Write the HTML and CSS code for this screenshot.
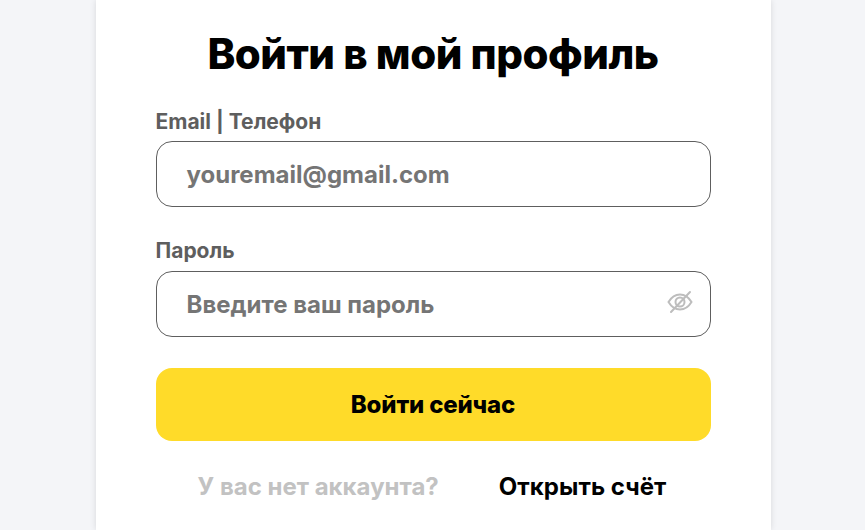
FILE: index.html
```html
<!DOCTYPE html>
<html>
<head>
<meta charset="utf-8">
<meta name="viewport" content="width=device-width, initial-scale=1.0">
<title>Войти в мой профиль</title>
<link rel="stylesheet" href="styles.css">
</head>
<body>
    <div class="card">
        <h1 class="title">Войти в мой профиль</h1>
        <form class="form">
            <label class="label">Email | Телефон</label>
            <div class="field"><span class="placeholder">youremail@gmail.com</span></div>
            <label class="label label-second">Пароль</label>
            <div class="field">
                <span class="placeholder">Введите ваш пароль</span>
                <svg class="eye" width="28" height="28" viewBox="0 0 28 28" fill="none" stroke="#bdbdbd" stroke-width="2" stroke-linecap="round">
                    <path d="M2.5 14c3-5 7-7.5 11.500-7.500S22.500 9 25.500 14c-3 5-7 7.500-11.500 7.500S5.500 19 2.500 14z"/>
                    <circle cx="14" cy="14" r="4.500"/>
                    <path d="M5 24L24 4"/>
                </svg>
            </div>
            <button class="submit" type="button">Войти сейчас</button>
        </form>
        <div class="footer">
            <span class="muted">У вас нет аккаунта?</span>
            <a class="open">Открыть счёт</a>
        </div>
    </div>
</body>
</html>
```

FILE: styles.css
```css
*{
    box-sizing: border-box;
    font-family: 'Inter', 'Liberation Sans', sans-serif;
}
html, body{
    height:100%;
}
body{
    margin:0;
    background:#f4f5f8;
    overflow:hidden;
}
.card{
    width:675.5px;
    height:530px;
    margin-left:95.5px;
    padding:28px 60.5px 0 60px;
    background:#fff;
    box-shadow:0 0 6px rgba(0,0,0,0.12);
}
.title{
    margin:0;
    font-size:42px;
    line-height:52px;
    font-weight:800;
    letter-spacing:-0.5px;
    color:#000;
    text-align:center;
}
.form{
    display:flex;
    flex-direction:column;
    margin-top:28px;
}
.label{
    font-size:21px;
    line-height:27px;
    font-weight:700;
    color:#5e5e5e;
    margin-bottom:6px;
}
.label-second{
    margin-top:30px;
    margin-bottom:7px;
}
.field{
    display:flex;
    align-items:center;
    justify-content:space-between;
    height:66px;
    padding:0 16px 0 30px;
    border:1px solid #5e5e5e;
    border-radius:16px;
}
.placeholder{
    font-size:24px;
    font-weight:700;
    color:#757575;
}
.eye{
    display:block;
    margin-bottom:5px;
}
.submit{
    height:73px;
    margin-top:31px;
    border:none;
    border-radius:16px;
    background:#ffdb29;
    color:#000;
    font-size:24px;
    font-weight:800;
    letter-spacing:-0.17px;
    cursor:pointer;
}
.footer{
    display:flex;
    justify-content:center;
    gap:60px;
    margin-top:30px;
    padding-right:2px;
    font-size:24px;
    line-height:32px;
    font-weight:700;
}
.muted{
    color:#c2c2c2;
}
.open{
    color:#000;
    letter-spacing:0.05px;
}
```
